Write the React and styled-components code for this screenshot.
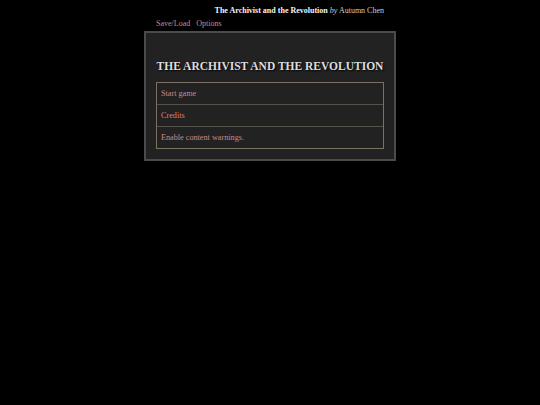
import React from "react";
import styled, { createGlobalStyle } from "styled-components";

const Global = createGlobalStyle`
  html, body { margin: 0; padding: 0; background: #000; }
  body { font-family: "Liberation Serif", "Times New Roman", serif; color: #ddd; }
`;

const Page = styled.div`
  width: 228px;
  margin: 0 auto;
  padding-top: 6px;
`;

const Header = styled.div`
  text-align: right;
  font-size: 8px;
  line-height: 10px;
  color: #ccc;
  b { color: #f4f4f4; font-weight: bold; }
  i { font-style: italic; }
`;

const Nav = styled.div`
  display: flex;
  gap: 6px;
  margin-top: 3px;
  font-size: 8px;
  line-height: 10px;
`;

const NavLink = styled.a`
  color: #d08686;
  text-decoration: none;
`;

const Panel = styled.div`
  margin: 2px -12px 0;
  border: 2px solid #4b4b4b;
  background: #222;
  padding: 26px 10px 10px;
`;

const Title = styled.h1`
  margin: 0 0 9px;
  text-align: center;
  font-size: 11.5px;
  letter-spacing: 0;
  font-weight: bold;
  color: #ddd;
  text-shadow: 1px 1px 2px #000;
  line-height: 14px;
  white-space: nowrap;
`;

const Menu = styled.div`
  border: 1px solid #7a7262;
`;

const Item = styled.div`
  padding: 0 4px;
  height: 21px;
  line-height: 21px;
  font-size: 8.2px;
  color: #d08686;
  & + & { border-top: 1px solid #55524c; }
`;

export default function App() {
  return (
    <>
      <Global />
      <Page>
        <Header>
          <b>The Archivist and the Revolution</b> <i>by</i> Autumn Chen
        </Header>
        <Nav>
          <NavLink>Save/Load</NavLink>
          <NavLink>Options</NavLink>
        </Nav>
        <Panel>
          <Title>THE ARCHIVIST AND THE REVOLUTION</Title>
          <Menu>
            <Item>Start game</Item>
            <Item>Credits</Item>
            <Item>Enable content warnings.</Item>
          </Menu>
        </Panel>
      </Page>
    </>
  );
}
